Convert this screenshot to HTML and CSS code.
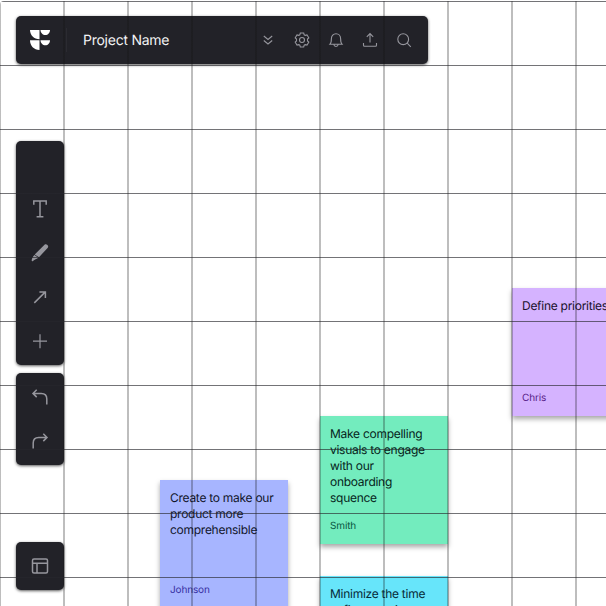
FILE: index.html
```
<!DOCTYPE html>
<html lang="en">
<head>
<meta charset="utf-8">
<title>Project Name</title>
<link rel="stylesheet" href="styles.css">
</head>
<body>
<main class="board">
  <article class="note purple"><p>Define priorities</p><footer>Chris</footer></article>
  <article class="note green"><p>Make compelling visuals to engage with our onboarding squence</p><footer>Smith</footer></article>
  <article class="note blue"><p>Create to make our product more comprehensible</p><footer>Johnson</footer></article>
  <article class="note cyan"><p>Minimize the time to first creative</p><footer></footer></article>

  <div class="interface">
    <header class="topbar panel">
      <div class="logo">
        <svg width="20" height="20" viewBox="0 0 20 20"><path d="M0 0H9.500V9.300C4 9.300 0 5 0 0ZM10.500 0H20C20 2.900 18 5 15.400 5S10.500 2.900 10.500 0ZM0 10.300H9.500V20C4 20 0 15.800 0 10.300ZM10.500 10.300H20C20 13.200 18 15.300 15.400 15.300S10.500 13.200 10.500 10.300Z"/></svg>
      </div>
      <h1>Project Name</h1>
      <nav class="actions">
        <svg viewBox="0 0 16 16"><path d="m3.800 4 4.200 3.500L12.200 4M3.800 8.500 8 12l4.200-3.500"/></svg>
        <svg viewBox="0 0 16 16"><path d="M6.300 1h3.400l.5 1.800 1 .6 1.800-.5 1.800 2.900-1.300 1.300v1.800l1.300 1.300-1.800 2.900-1.800-.5-1 .6-.5 1.800H6.300l-.5-1.800-1-.6-1.800.5-1.800-2.900 1.300-1.300V7.100L1.200 5.800 3 2.900l1.800.5 1-.6z"/><circle cx="8" cy="8" r="2.500"/></svg>
        <svg viewBox="0 0 16 16"><path d="M2 12.200c1-1 1.400-2 1.400-5.700C3.400 3.700 5.400 1.700 8 1.700s4.600 2 4.600 4.800c0 3.700.4 4.700 1.400 5.700zM5.800 12.500c.4 2.600 4 2.600 4.400 0"/></svg>
        <svg viewBox="0 0 16 16"><path d="M8 10.500V1.800M4.800 4.800 8 1.600l3.200 3.200M1.500 11v2.200c0 .7.400 1 1 1h11c.6 0 1-.3 1-1V11"/></svg>
        <svg viewBox="0 0 16 16"><circle cx="7.200" cy="7.200" r="5.400"/><path d="m11.200 11.200 3.600 3.600"/></svg>
      </nav>
    </header>

    <aside class="sidebar">
      <div class="tools panel">
        <svg class="text-tool" viewBox="0 0 20 20"><path d="M3.800 5.800V1.900h12.400v3.900M10 1.900v15.800M6.600 17.700h6.800"/></svg>
        <svg viewBox="0 0 20 20"><path class="solid" d="M4.700 11.400 14.500 1.800c1.700-1.500 4.800.9 3.300 2.900L9 14.200zM4.400 11.900l3.900 2.800c-1.500 1-3 1.900-4 2.200-.8.300-1.300 1.700-2.500 1.200-.4-1.900.8-4.400 2.600-6.200z"/></svg>
        <svg viewBox="0 0 20 20"><path d="M4.300 15.900 15.100 5.100M9.400 4.900h6v6"/></svg>
        <svg class="plus" viewBox="0 0 20 20"><path d="M10 3.200v14M3 10.200h14"/></svg>
      </div>
      <div class="history panel">
        <svg viewBox="0 0 20 20"><path d="M6.700 2.700 3 6.400l3.700 3.700M3 6.400h8.300c4 0 5.500 2 5.500 5.500v5.600"/></svg>
        <svg viewBox="0 0 20 20"><path d="m13.300 2.700 3.700 3.700-3.700 3.700M17 6.400H8.700c-4 0-5.500 2-5.500 5.500v5.600"/></svg>
      </div>
      <div class="layout panel">
        <svg viewBox="0 0 20 20"><rect x="2.500" y="3" width="15" height="14" rx="1.500"/><path d="M2.500 7.300h15M7 7.300V17"/></svg>
      </div>
    </aside>
  </div>
  <div class="grid"></div>
</main>
</body>
</html>
```

FILE: styles.css
```
* { box-sizing: border-box; }

body {
  margin: 0;
  background: #fff;
  font-family: Inter, "Liberation Sans", sans-serif;
  text-rendering: geometricPrecision;
}

.board {
  position: relative;
  width: 606px;
  height: 606px;
  overflow: hidden;
}

.interface { padding: 16px; }

.panel {
  background: #222228;
  border-radius: 5px;
  box-shadow: 0 1px 3px rgba(0, 0, 0, .65);
}

svg {
  display: block;
  fill: none;
  stroke: #96969d;
  stroke-width: 1.5;
}

.topbar {
  width: 412px;
  height: 48px;
  display: flex;
  align-items: center;
  padding-right: 16px;
}

.logo {
  width: 51px;
  height: 24px;
  padding: 2px 0 0 14px;
  border-right: 1px solid #2b2b31;
}

.logo svg { fill: #fff; stroke: none; }

h1 {
  margin: 0;
  padding: 1px 0 0 16px;
  font-size: 14px;
  line-height: 20px;
  font-weight: 400;
  letter-spacing: -.25px;
  color: #f2f2f3;
}

.actions { display: flex; gap: 18px; margin-left: auto; }
.actions svg { width: 16px; height: 16px; stroke-width: 1.1; }

.sidebar { width: 48px; padding-top: 77px; }
.sidebar svg { width: 20px; height: 20px; }
.tools {
  height: 224px;
  display: flex;
  flex-direction: column;
  align-items: center;
  gap: 24px;
  padding-top: 58px;
}
.sidebar .plus { stroke-width: 1.2; }
.sidebar .solid { fill: #96969d; stroke: none; }

.history {
  height: 92px;
  margin-top: 8px;
  display: flex;
  flex-direction: column;
  align-items: center;
  gap: 24px;
  padding-top: 14px;
}

.layout {
  height: 48px;
  margin-top: 77px;
  display: grid;
  place-items: center;
}

.note {
  position: absolute;
  width: 128px;
  height: 128px;
  padding: 10px 10px 9px;
  display: flex;
  flex-direction: column;
  justify-content: space-between;
  box-shadow: 0 3px 5px rgba(0, 0, 0, .35);
}
.note p { margin: 0; font-size: 12px; line-height: 16px; letter-spacing: -.27px; }
.note footer { font-size: 10px; line-height: 18px; letter-spacing: -.15px; }

.purple { left: 512px; top: 288px; background: #d5b3ff; color: #1a102c; }
.purple p { white-space: nowrap; }
.purple footer { color: #581c87; }
.green { left: 320px; top: 416px; background: #73ecbe; color: #06241b; }
.green footer { color: #075640; }
.blue { left: 160px; top: 480px; background: #a7b5ff; color: #12162c; }
.blue footer { color: #3730a3; }
.cyan { left: 320px; top: 576px; background: #67e5fa; color: #062a38; }

.grid {
  position: absolute;
  left: 0;
  top: 1px;
  width: 606px;
  height: 605px;
  border-top-left-radius: 4px;
  pointer-events: none;
  background:
    repeating-linear-gradient(to bottom, rgba(40, 40, 45, .65) 0 1px, transparent 1px 64px),
    repeating-linear-gradient(to right, rgba(20, 20, 20, .28) 0 1px, transparent 1px 63px, rgba(20, 20, 20, .28) 63px 64px);
}
```
